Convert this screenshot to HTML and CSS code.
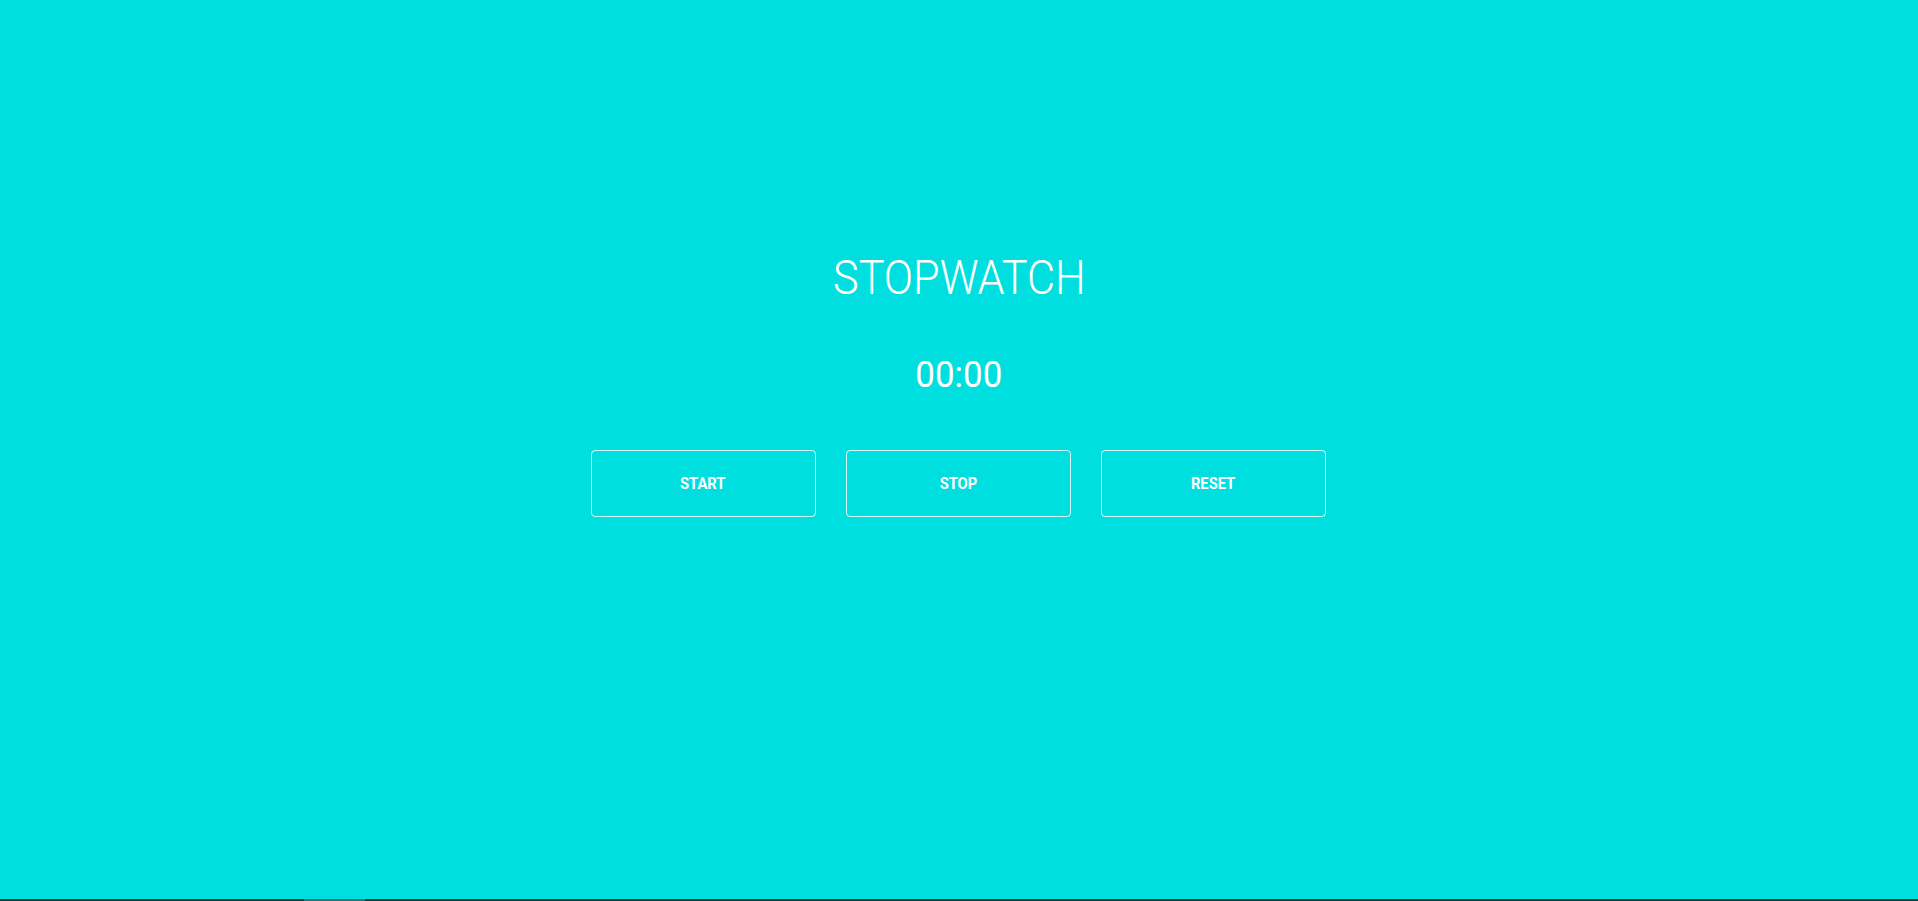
FILE: index.html
```html
<!DOCTYPE html>
<html lang="en">
<head>
<meta charset="utf-8">
<title>Stopwatch</title>
<link rel="stylesheet" href="styles.css">
</head>
<body>
<main class="watch">
  <h1 class="title"><span class="cond">STOPWATCH</span></h1>
  <div class="time"><span class="cond">00:00</span></div>
  <div class="controls">
    <button class="btn" type="button"><span class="cond">START</span></button>
    <button class="btn" type="button"><span class="cond">STOP</span></button>
    <button class="btn" type="button"><span class="cond">RESET</span></button>
  </div>
</main>
<div class="hscroll"><div class="hscroll-thumb"></div></div>
</body>
</html>
```

FILE: styles.css
```css
html, body {
  margin: 0;
  padding: 0;
  height: 100%;
}
body {
  background: #00dfe0;
  color: #ffffff;
  font-family: Roboto, "Liberation Sans", sans-serif;
  overflow: hidden;
}
.watch {
  display: flex;
  flex-direction: column;
  align-items: center;
  padding-top: 250px;
}
.cond {
  display: inline-block;
}
.title {
  margin: 0;
  font-size: 48px;
  font-weight: 300;
  line-height: 56px;
}
.title .cond {
  transform: scaleX(0.9);
}
.time {
  margin-top: 48px;
  font-size: 36px;
  font-weight: 400;
  line-height: 42px;
}
.time .cond {
  transform: scaleX(0.97);
}
.controls {
  display: flex;
  gap: 30px;
  margin-top: 54px;
  margin-right: 2px;
}
.btn {
  width: 225px;
  height: 67px;
  background: transparent;
  border: 1px solid rgba(255, 255, 255, 0.85);
  border-radius: 4px;
  color: #ffffff;
  font-family: Roboto, "Liberation Sans", sans-serif;
  font-size: 16px;
  font-weight: 700;
  padding: 0;
  cursor: pointer;
}
.btn .cond {
  transform: scaleX(0.92);
}
.hscroll {
  position: fixed;
  left: 0;
  right: 0;
  bottom: 0;
  height: 2px;
  background: #063c3c;
}
.hscroll-thumb {
  margin-left: 304px;
  width: 61px;
  height: 2px;
  background: #2f7070;
}
```
